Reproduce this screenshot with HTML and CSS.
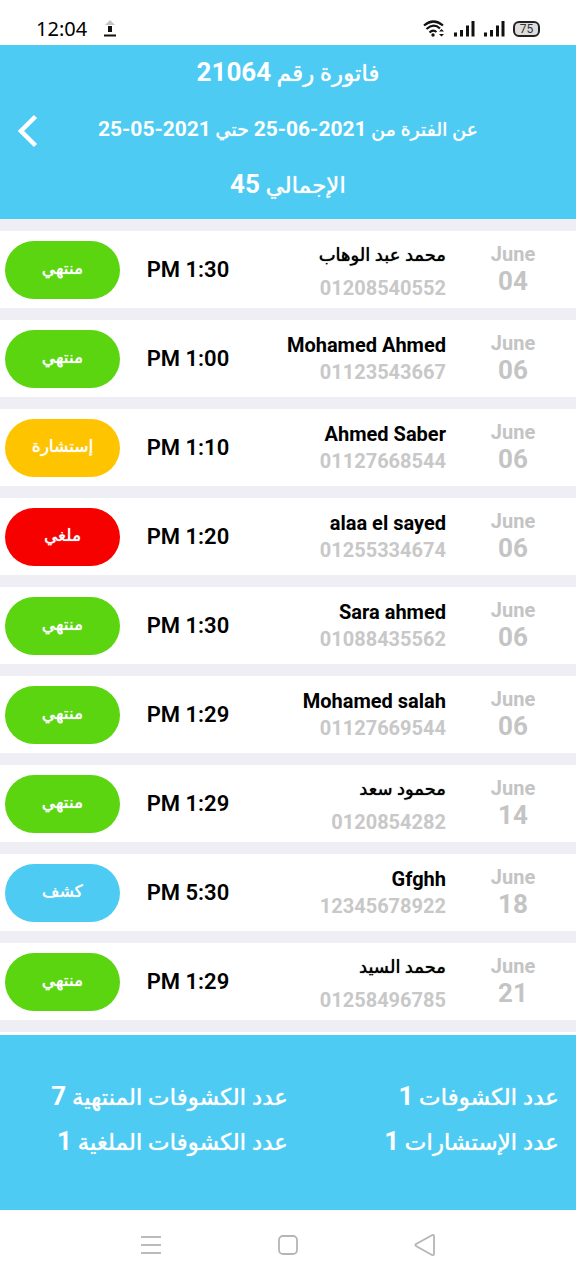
FILE: index.html
```html
<!DOCTYPE html>
<html lang="ar" dir="rtl">
<head>
<meta charset="utf-8">
<meta name="viewport" content="width=device-width, initial-scale=1">
<title>فاتورة رقم 21064</title>
<link rel="stylesheet" href="styles.css">
</head>
<body>
<div class="screen">
  <div class="statusbar" dir="ltr">
    <span class="clock">12:04</span>
    <svg class="upload" width="14" height="18" viewBox="0 0 14 18" aria-hidden="true"><path d="M7 0l5 5H2z" fill="#c4c4c4"/><path d="M5 6h4v6H5z" fill="#111"/><path d="M1 15.500h12" stroke="#111" stroke-width="2"/></svg>
    <div class="indicators">
      <svg width="22" height="18" viewBox="0 0 22 18" fill="none" stroke="#111" stroke-width="2.200" aria-hidden="true"><path d="M1 5.500Q10.500-2.500 20 5.500M3.500 9Q10.500 2.700 17 8.500M6.500 12.500Q10 9 13.500 12"/><circle cx="10" cy="15" r="1.700" fill="#111" stroke="none"/><path d="M16 11.500l2.500-2.500 2.500 2.500zM16 14l2.500 2.500L21 14z" fill="#111" stroke="none"/></svg>
      <svg width="22" height="18" viewBox="0 0 22 18" stroke="#111" stroke-width="3" aria-hidden="true"><path d="M2.500 16.500v-4M8.500 16.500V10M14.500 16.500V5.500M20 16.500V1"/></svg>
      <svg width="22" height="18" viewBox="0 0 22 18" stroke="#111" stroke-width="3" aria-hidden="true"><path d="M2.500 16.500v-4M8.500 16.500V10M14.500 16.500V5.500M20 16.500V1"/></svg>
      <span class="battery">75</span>
    </div>
  </div>

  <header class="invoice">
    <h1 class="big">فاتورة رقم <b>21064</b></h1>
    <button class="back" type="button" aria-label="رجوع"><svg width="20" height="34" viewBox="0 0 20 34" fill="none" stroke="#fff" stroke-width="4.500" aria-hidden="true"><path d="M17.500 2.500L3 17l14.500 14.500"/></svg></button>
    <p class="period">عن الفترة من <bdi dir="ltr">25-06-2021</bdi> حتي <bdi dir="ltr">25-05-2021</bdi></p>
    <p class="big">الإجمالي <b>45</b></p>
  </header>

  <main>
    <ul class="visits" dir="ltr">
      <li class="visit"><span class="badge done">منتهي</span><span class="time">PM 1:30</span><div class="patient"><span class="name arabic" dir="rtl">محمد عبد الوهاب</span><span class="phone">01208540552</span></div><div class="date"><span>June</span><span class="day">04</span></div></li>
      <li class="visit"><span class="badge done">منتهي</span><span class="time">PM 1:00</span><div class="patient"><span class="name">Mohamed Ahmed</span><span class="phone">01123543667</span></div><div class="date"><span>June</span><span class="day">06</span></div></li>
      <li class="visit"><span class="badge consult">إستشارة</span><span class="time">PM 1:10</span><div class="patient"><span class="name">Ahmed Saber</span><span class="phone">01127668544</span></div><div class="date"><span>June</span><span class="day">06</span></div></li>
      <li class="visit"><span class="badge cancelled">ملغي</span><span class="time">PM 1:20</span><div class="patient"><span class="name">alaa el sayed</span><span class="phone">01255334674</span></div><div class="date"><span>June</span><span class="day">06</span></div></li>
      <li class="visit"><span class="badge done">منتهي</span><span class="time">PM 1:30</span><div class="patient"><span class="name">Sara ahmed</span><span class="phone">01088435562</span></div><div class="date"><span>June</span><span class="day">06</span></div></li>
      <li class="visit"><span class="badge done">منتهي</span><span class="time">PM 1:29</span><div class="patient"><span class="name">Mohamed salah</span><span class="phone">01127669544</span></div><div class="date"><span>June</span><span class="day">06</span></div></li>
      <li class="visit"><span class="badge done">منتهي</span><span class="time">PM 1:29</span><div class="patient"><span class="name arabic" dir="rtl">محمود سعد</span><span class="phone">0120854282</span></div><div class="date"><span>June</span><span class="day">14</span></div></li>
      <li class="visit"><span class="badge exam">كشف</span><span class="time">PM 5:30</span><div class="patient"><span class="name">Gfghh</span><span class="phone">12345678922</span></div><div class="date"><span>June</span><span class="day">18</span></div></li>
      <li class="visit"><span class="badge done">منتهي</span><span class="time">PM 1:29</span><div class="patient"><span class="name arabic" dir="rtl">محمد السيد</span><span class="phone">01258496785</span></div><div class="date"><span>June</span><span class="day">21</span></div></li>
    </ul>
  </main>

  <footer class="summary">
    <p>عدد الكشوفات <b>1</b></p>
    <p>عدد الكشوفات المنتهية <b>7</b></p>
    <p>عدد الإستشارات <b>1</b></p>
    <p>عدد الكشوفات الملغية <b>1</b></p>
  </footer>

  <nav class="navbar" dir="ltr">
    <button type="button" aria-label="Recent apps"><svg width="22" height="22" viewBox="0 0 22 22" stroke="#bbb" stroke-width="2" aria-hidden="true"><path d="M1 3h20M1 11h20M1 19h20"/></svg></button>
    <button type="button" aria-label="Home"><svg width="22" height="22" viewBox="0 0 22 22" fill="none" stroke="#b5b5b5" stroke-width="1.800" aria-hidden="true"><rect x="2" y="2" width="18" height="18" rx="4"/></svg></button>
    <button type="button" aria-label="Back"><svg width="22" height="22" viewBox="0 0 22 22" fill="none" stroke="#b5b5b5" stroke-width="1.800" stroke-linejoin="round" aria-hidden="true"><path d="M2 10Q1 11 2 12L18 21Q20 21.500 20 20V2Q20 .5 18 1.200Z"/></svg></button>
  </nav>
</div>
</body>
</html>
```

FILE: styles.css
```css
* { box-sizing: border-box; }

body {
  margin: 0;
  background: #fff;
  color: #000;
  font-family: Roboto, "DejaVu Sans", sans-serif;
  font-size: 20px;
}

h1, p, ul { margin: 0; padding: 0; }
button { padding: 0; border: 0; background: none; font: inherit; cursor: pointer; }
svg { display: block; }

.screen {
  display: flex;
  flex-direction: column;
  min-height: 100vh;
}

.statusbar {
  display: flex;
  align-items: center;
  height: 45px;
  padding: 12px 36px 0;
}
.clock { font-family: "Noto Sans", sans-serif; font-size: 20px; }
.upload { margin-left: 16px; }
.indicators {
  display: flex;
  align-items: center;
  gap: 8px;
  margin-left: auto;
}
.battery {
  width: 27px;
  height: 16px;
  border: 2px solid #222;
  border-radius: 6px;
  background: #ddd;
  color: #333;
  font-size: 12px;
  line-height: 12px;
  text-align: center;
}

/* A medium weight for the Arabic face, which has only regular and bold */
.big, .period, .badge, .arabic, .summary { text-shadow: 0 0 1px currentColor; }
b, bdi { font-weight: 700; text-shadow: none; }

.invoice {
  display: grid;
  grid-template-columns: 56px 1fr 56px;
  grid-auto-rows: 56px;
  align-items: center;
  direction: ltr;
  padding-bottom: 6px;
  background: #4dcbf3;
  color: #fff;
  text-align: center;
}
.invoice > * { direction: rtl; }
.big { grid-column: 1 / -1; font-size: 23px; line-height: 40px; font-weight: 400; }
.big b { font-size: 26px; }
.period { font-size: 19px; line-height: 40px; white-space: nowrap; }
.period bdi { font-size: 21px; }
.back { display: flex; justify-content: center; padding-top: 4px; direction: ltr; }

.visits {
  display: flex;
  flex-direction: column;
  gap: 12px;
  padding: 12px 0;
  background: #efeef4;
  list-style: none;
}
.visit {
  display: grid;
  grid-template-columns: 115px 136px 1fr 130px;
  align-items: center;
  min-height: 77px;
  padding-left: 5px;
  background: #fff;
}
.badge {
  height: 58px;
  border-radius: 29px;
  color: #fff;
  font-size: 17px;
  line-height: 55px;
  text-align: center;
}
.done { background: #5ad510; }
.consult { background: #ffc400; }
.cancelled { background: #f60000; }
.exam { background: #4dcbf3; }
.time { font-size: 22px; font-weight: 600; text-align: center; }
.patient { display: flex; flex-direction: column; line-height: 27px; text-align: right; font-weight: 700; }
.arabic { margin-bottom: 4px; font-size: 18px; font-weight: 400; line-height: 33px; }
.phone { color: #c8c8c8; }
.date {
  display: flex;
  flex-direction: column;
  padding: 0 0 4px 4px;
  color: #c4c4c4;
  font-weight: 700;
  line-height: 27px;
  text-align: center;
}
.day { font-size: 26px; }

.summary {
  display: grid;
  grid-template-columns: 1fr 1fr;
  grid-auto-rows: 45px;
  flex: 1;
  align-content: center;
  align-items: center;
  min-height: 175px;
  margin-top: 3px;
  padding-bottom: 8px;
  background: #4dcbf3;
  color: #fff;
  font-size: 23px;
  white-space: nowrap;
}
.summary b { font-size: 26px; }
.summary p:nth-child(odd) { padding-right: 17px; }

.navbar {
  display: flex;
  justify-content: center;
  align-items: center;
  gap: 115px;
  height: 70px;
}
```
